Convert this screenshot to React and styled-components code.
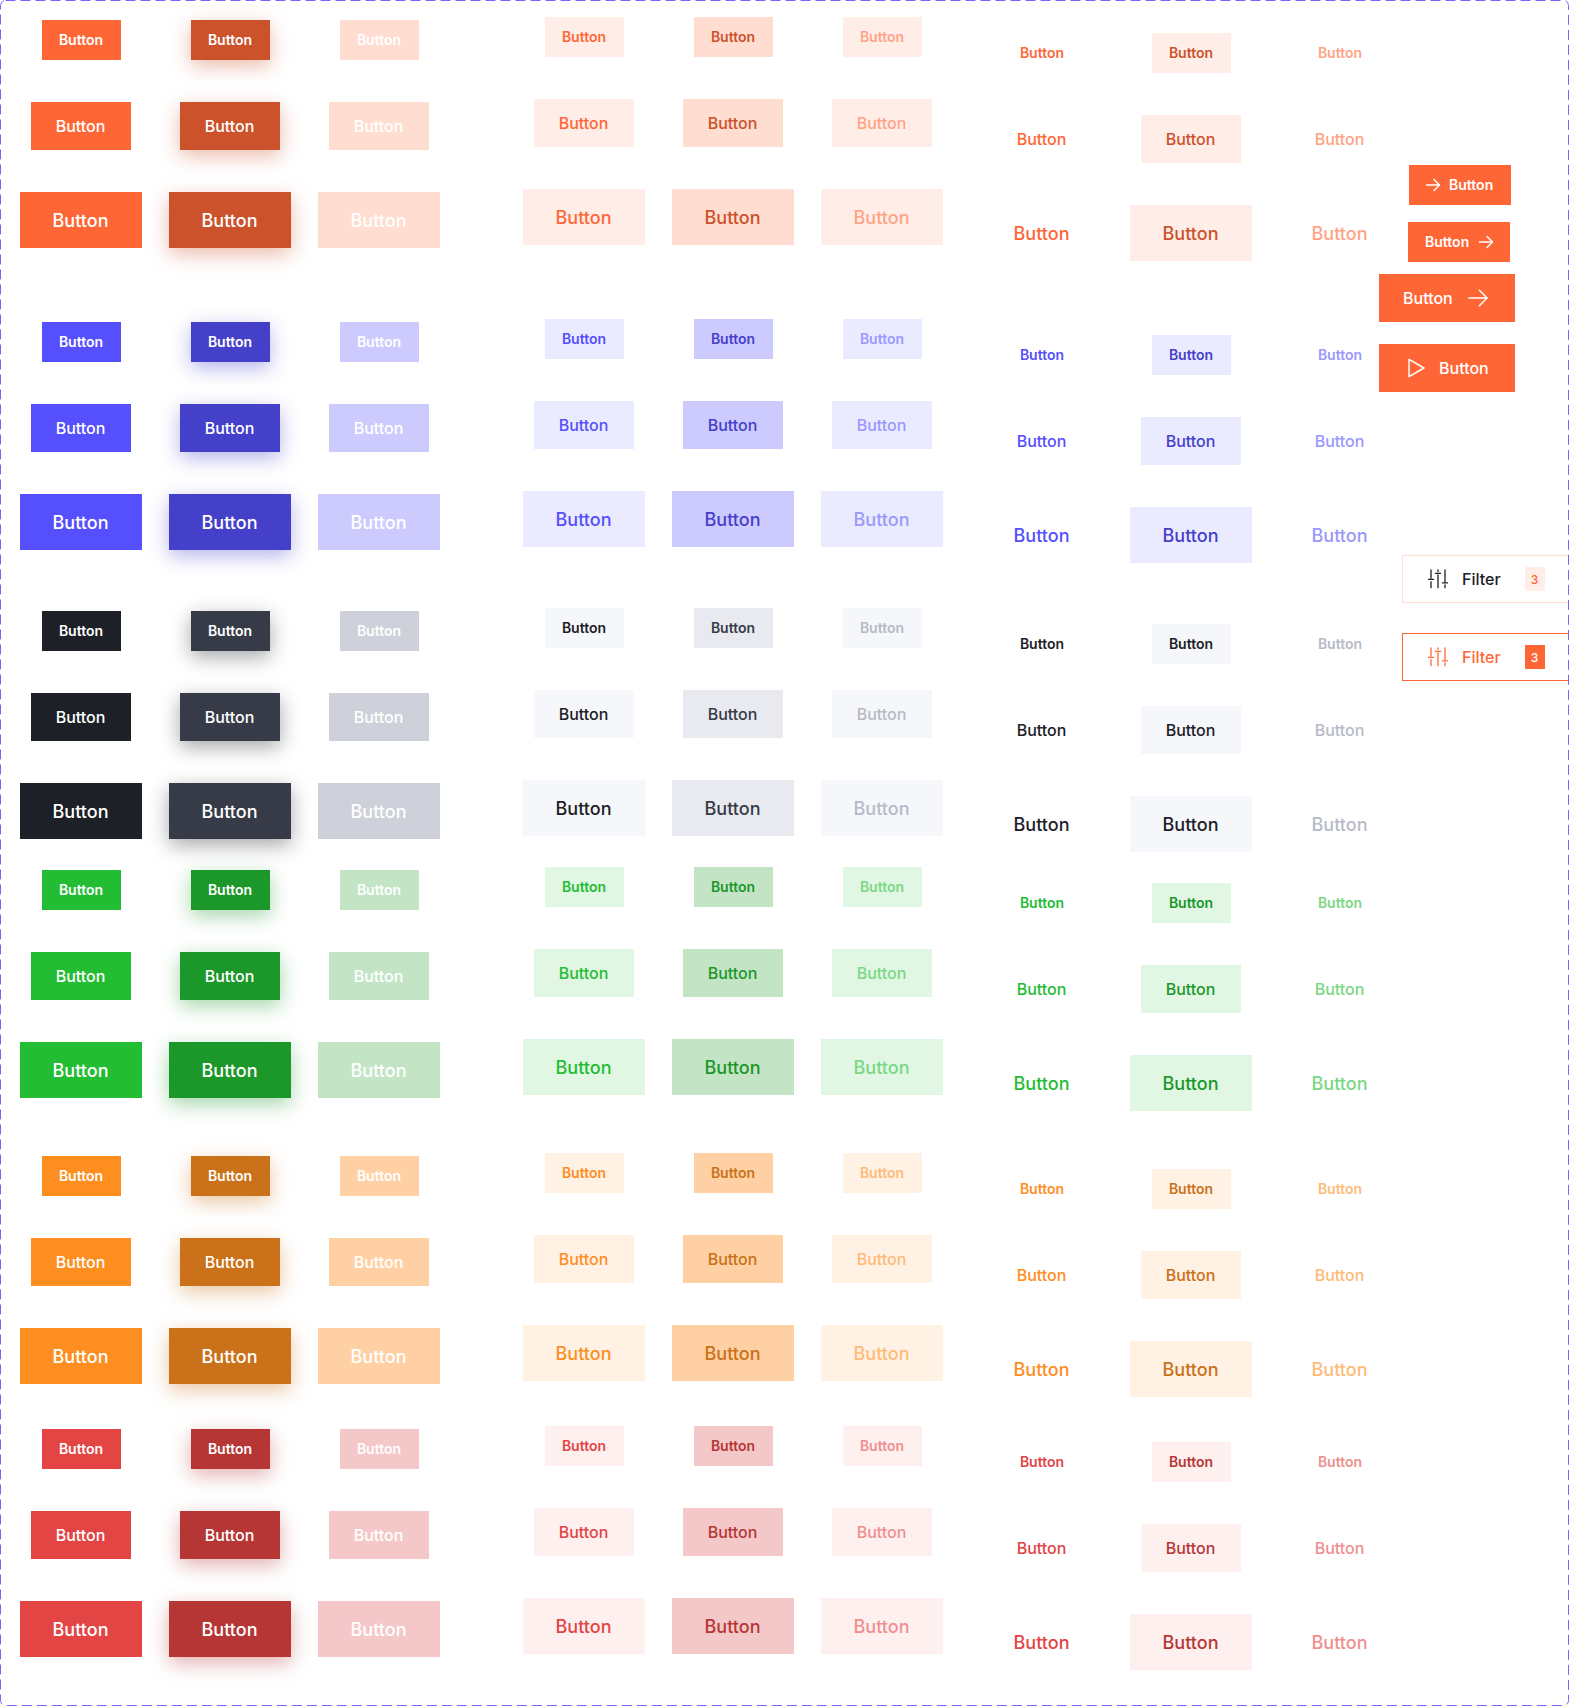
import React from "react";
import styled, { createGlobalStyle } from "styled-components";

const Global = createGlobalStyle`
  html, body { margin: 0; padding: 0; background: #fff; }
  body { font-family: "Inter", "Liberation Sans", sans-serif; }
`;

const palettes = [
  { key: "primary", base: "#FF6636", deep: "#CC522B", soft: "#FFEEE8", mid: "#FFDDD1", faint: "#FFA386", ghostBg: "#FFEEE8", shadow: "rgba(204,82,43,.4)", gap: 0 },
  { key: "secondary", base: "#564FFD", deep: "#4540CA", soft: "#EBEBFF", mid: "#CDCBFE", faint: "#9A97FE", ghostBg: "#EBEBFF", shadow: "rgba(69,64,202,.4)", gap: 58 },
  { key: "gray", base: "#1D2026", deep: "#363B47", soft: "#F5F7FA", mid: "#E9EAF0", faint: "#B7BAC7", ghostBg: "#F5F7FA", solidFaint: "#CED1D9", softText: "#1D2026", softDeep: "#363B47", ghostText: "#1D2026", shadow: "rgba(29,32,38,.4)", gap: 45 },
  { key: "success", base: "#23BD33", deep: "#1C9729", soft: "#E1F7E3", mid: "#C3E5C6", faint: "#7BD785", ghostBg: "#E1F7E3", shadow: "rgba(28,151,41,.4)", gap: 15 },
  { key: "warning", base: "#FD8E1F", deep: "#CA7119", soft: "#FFF2E5", mid: "#FFD0A3", faint: "#FEBB79", ghostBg: "#FFF2E5", shadow: "rgba(202,113,25,.4)", gap: 42 },
  { key: "danger", base: "#E34444", deep: "#B63636", soft: "#FFF0F0", mid: "#F4C8C8", faint: "#EE8F8F", ghostBg: "#FFF0F0", shadow: "rgba(182,54,54,.4)", gap: 29 },
];

const sizes = [
  { w: 79, h: 40, fs: 14 },
  { w: 100, h: 48, fs: 16 },
  { w: 122, h: 56, fs: 18 },
];

const Frame = styled.div`
  position: relative;
  width: 1569px;
  height: 1706px;
  overflow: hidden;
  background: #fff;
  display: flex;
  align-items: flex-start;
`;

const DashedOutline = styled.svg`
  position: absolute;
  inset: 0;
  width: 1569px;
  height: 1706px;
  pointer-events: none;
`;

const Bands = styled.div`
  flex: none;
  width: 1380px;
  padding: 17px 0 0 20px;
  box-sizing: border-box;
  display: flex;
  flex-direction: column;
`;

const Band = styled.div`
  display: flex;
  margin-top: ${(p) => p.$gap}px;
  height: 244px;
`;

const Group = styled.div`
  flex: none;
  display: grid;
  grid-template-columns: repeat(3, 122px);
  grid-template-rows: 40px 48px 56px;
  column-gap: 27px;
  row-gap: 42px;
  align-items: center;
  justify-items: center;
  padding-top: ${(p) => p.$top}px;
  margin-left: ${(p) => p.$left}px;
`;

const Btn = styled.button`
  display: flex;
  align-items: center;
  justify-content: center;
  box-sizing: border-box;
  border: 0;
  padding: ${(p) => (p.$fs === 14 ? "0 0 1px" : "0 1px 0 0")};
  margin: 0;
  width: ${(p) => p.$w}px;
  height: ${(p) => p.$h}px;
  font-family: "Inter", "Liberation Sans", sans-serif;
  font-size: ${(p) => p.$fs}px;
  font-weight: ${(p) => (p.$fs === 14 ? 600 : 500)};
  background: ${(p) => p.$bg};
  color: ${(p) => p.$fg};
  box-shadow: ${(p) => (p.$shadow ? `0 6px 20px ${p.$shadow}` : "none")};
`;

const Side = styled.div`
  flex: none;
  display: flex;
  flex-direction: column;
  align-items: flex-start;
  padding-top: 165px;
`;

const IconBtn = styled.button`
  display: flex;
  align-items: center;
  flex: none;
  box-sizing: border-box;
  border: 0;
  margin: ${(p) => p.$mt}px 0 0 ${(p) => p.$ml}px;
  padding: 0 0 ${(p) => (p.$fs === 14 ? 1 : 0)}px ${(p) => p.$pl}px;
  gap: ${(p) => p.$gap}px;
  width: ${(p) => p.$w}px;
  height: ${(p) => p.$h}px;
  background: #ff6636;
  color: #fff;
  font-family: "Inter", "Liberation Sans", sans-serif;
  font-size: ${(p) => p.$fs}px;
  font-weight: ${(p) => (p.$fs === 14 ? 600 : 500)};
`;

const FilterBtn = styled.button`
  display: flex;
  align-items: center;
  flex: none;
  box-sizing: border-box;
  width: 171px;
  height: 48px;
  margin: ${(p) => p.$mt}px 0 0 22px;
  padding: 0 0 0 23px;
  gap: 12px;
  background: #fff;
  border: 1px solid ${(p) => (p.$active ? "#FF6636" : "#FFDDD1")};
  color: ${(p) => (p.$active ? "#FF6636" : "#1D2026")};
  font-family: "Inter", "Liberation Sans", sans-serif;
  font-size: 16px;
  font-weight: 500;
`;

const Badge = styled.span`
  display: flex;
  align-items: center;
  justify-content: center;
  width: 20px;
  height: 24px;
  margin-left: 12px;
  font-size: 12px;
  font-weight: 500;
  background: ${(p) => (p.$active ? "#FF6636" : "#FFEEE8")};
  color: ${(p) => (p.$active ? "#fff" : "#FF6636")};
`;

const Glyph = styled.svg`
  display: block;
  flex: none;
  fill: none;
  stroke: currentColor;
  stroke-linecap: round;
  stroke-linejoin: round;
`;

const ArrowIcon = ({ size, sw }) => (
  <Glyph width={size} height={size} viewBox="0 0 20 20" strokeWidth={sw}>
    <path d="M3.5 10h13M11 4.5l5.5 5.5-5.5 5.5" />
  </Glyph>
);

const PlayIcon = () => (
  <Glyph width="24" height="24" viewBox="0 0 24 24" strokeWidth="1.5">
    <path d="M5 3.4 20 12 5 20.6Z" />
  </Glyph>
);

const SlidersIcon = () => (
  <Glyph width="24" height="24" viewBox="0 0 24 24" strokeWidth="1.3">
    <path d="M5 3v8M2.5 12.4h5M5 14.7v6M12 3v1.6M9.4 6.3h5.2M12 8v12.7M19 3v11.7M16.4 15.8h5.2M19 18v2.7" />
  </Glyph>
);

const variants = {
  solid: (c) => [
    { bg: c.base, fg: "#fff" },
    { bg: c.deep, fg: "#fff", shadow: c.shadow },
    { bg: c.solidFaint || c.mid, fg: "#fff" },
  ],
  soft: (c) => [
    { bg: c.soft, fg: c.softText || c.base },
    { bg: c.mid, fg: c.softDeep || c.deep },
    { bg: c.soft, fg: c.faint },
  ],
  ghost: (c) => [
    { bg: "transparent", fg: c.ghostText || c.base },
    { bg: c.ghostBg, fg: c.softText || c.deep },
    { bg: "transparent", fg: c.faint },
  ],
};

const ButtonGrid = ({ palette, kind, top, left }) => (
  <Group $top={top} $left={left}>
    {sizes.flatMap((s) =>
      variants[kind](palette).map((v, i) => (
        <Btn key={`${s.fs}-${i}`} $w={s.w} $h={s.h} $fs={s.fs} $bg={v.bg} $fg={v.fg} $shadow={v.shadow}>
          Button
        </Btn>
      ))
    )}
  </Group>
);

export default function App() {
  return (
    <>
      <Global />
      <Frame>
        <Bands>
          {palettes.map((c) => (
            <Band key={c.key} $gap={c.gap}>
              <ButtonGrid palette={c} kind="solid" top={3} left={0} />
              <ButtonGrid palette={c} kind="soft" top={0} left={83} />
              <ButtonGrid palette={c} kind="ghost" top={16} left={38} />
            </Band>
          ))}
        </Bands>
        <Side>
          <IconBtn $mt={0} $ml={29} $pl={14} $gap={6} $w={102} $h={40} $fs={14}>
            <ArrowIcon size={20} sw={1.5} />
            Button
          </IconBtn>
          <IconBtn $mt={17} $ml={28} $pl={17} $gap={7} $w={102} $h={40} $fs={14}>
            Button
            <ArrowIcon size={20} sw={1.5} />
          </IconBtn>
          <IconBtn $mt={12} $ml={-1} $pl={24} $gap={11} $w={136} $h={48} $fs={16}>
            Button
            <ArrowIcon size={28} sw={1.1} />
          </IconBtn>
          <IconBtn $mt={22} $ml={-1} $pl={25} $gap={11} $w={136} $h={48} $fs={16}>
            <PlayIcon />
            Button
          </IconBtn>
          <FilterBtn $mt={163}>
            <SlidersIcon />
            Filter
            <Badge>3</Badge>
          </FilterBtn>
          <FilterBtn $mt={30} $active>
            <SlidersIcon />
            Filter
            <Badge $active>3</Badge>
          </FilterBtn>
        </Side>
        <DashedOutline viewBox="0 0 1569 1706" aria-hidden="true">
          <rect x="0.5" y="0.5" width="1568" height="1705" rx="5" fill="none" stroke="#7B61FF" strokeDasharray="10 5" />
        </DashedOutline>
      </Frame>
    </>
  );
}
